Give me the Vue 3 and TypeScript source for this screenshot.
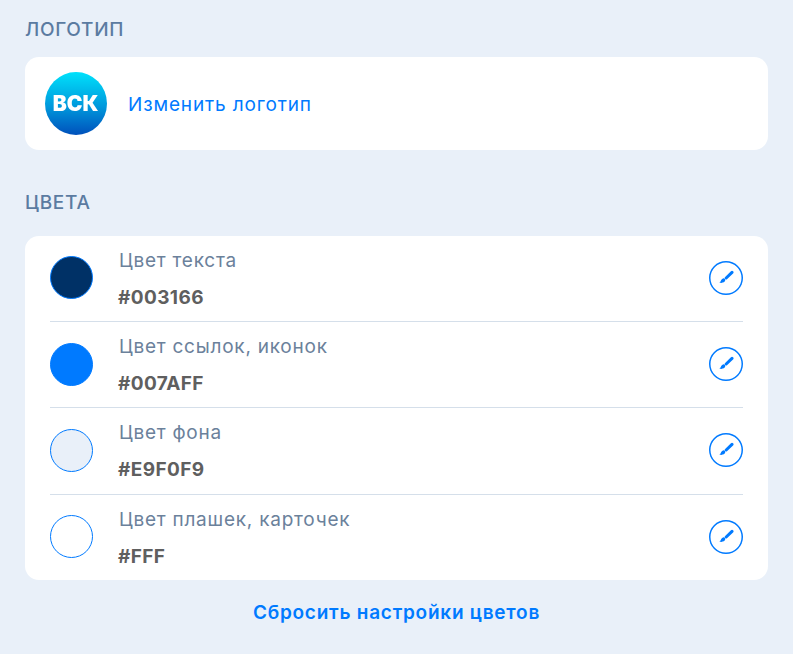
<template>
  <div class="page">
    <h2 class="section-title">ЛОГОТИП</h2>
    <div class="logo-card">
      <svg class="logo" viewBox="0 0 62 63" width="62" height="63">
        <defs>
          <linearGradient id="logo-bg" x1="0" y1="0" x2="0" y2="1">
            <stop offset="0" stop-color="#00e1fb" />
            <stop offset="0.55" stop-color="#0098dc" />
            <stop offset="1" stop-color="#0050bb" />
          </linearGradient>
        </defs>
        <ellipse cx="31" cy="31.5" rx="31" ry="31.5" fill="url(#logo-bg)" />
        <text x="30.5" y="39" text-anchor="middle" class="logo-text">ВСК</text>
      </svg>
      <a class="logo-link">Изменить логотип</a>
    </div>

    <h2 class="section-title colors-title">ЦВЕТА</h2>
    <div class="colors-card">
      <div v-for="item in colors" :key="item.label" class="color-row">
        <span class="swatch" :style="{ background: item.value }"></span>
        <div class="color-info">
          <div class="color-label">{{ item.label }}</div>
          <div class="color-value">{{ item.value }}</div>
        </div>
        <button class="edit-btn" type="button">
          <svg viewBox="0 0 16 16" width="16" height="16">
            <path d="M14 2.4 8.2 8" fill="none" stroke="#007aff" stroke-width="3" stroke-linecap="round" />
            <path d="M5.2 8.4c1.2-.4 2.5 1 2 2.2-.5 1.6-2.4 2.6-5.1 2.2-.5 0-.6-.5-.2-.8.8-.5.9-1 1.2-1.8.4-.9 1-1.5 2.1-1.8z" fill="#007aff" />
          </svg>
        </button>
      </div>
    </div>
    <a class="reset-link">Сбросить настройки цветов</a>
  </div>
</template>

<script setup lang="ts">
const colors = [
  { label: 'Цвет текста', value: '#003166' },
  { label: 'Цвет ссылок, иконок', value: '#007AFF' },
  { label: 'Цвет фона', value: '#E9F0F9' },
  { label: 'Цвет плашек, карточек', value: '#FFF' },
]
</script>

<style>
html,
body {
  background: #e9f0f9;
}
</style>

<style scoped>
.page {
  box-sizing: border-box;
  height: 654px;
  padding: 19px 25px 0;
  background: #e9f0f9;
  font-family: Inter, "Noto Sans", sans-serif;
  overflow: hidden;
}

.section-title {
  margin: 0;
  font-size: 19px;
  line-height: 22px;
  font-weight: 500;
  letter-spacing: 0.7px;
  color: #5b7ba1;
}

.logo-card {
  display: flex;
  align-items: center;
  gap: 21px;
  height: 93px;
  margin-top: 16px;
  padding: 0 20px;
  background: #fff;
  border-radius: 14px;
}

.logo {
  flex-shrink: 0;
}

.logo-text {
  font-family: Inter, sans-serif;
  font-size: 21px;
  font-weight: 900;
  fill: #fff;
  filter: blur(0.4px);
}

.logo-link {
  padding-top: 1px;
  font-size: 19px;
  letter-spacing: 0.85px;
  color: #007aff;
}

.colors-title {
  margin-top: 42px;
}

.colors-card {
  margin-top: 22px;
  padding: 0 25px;
  background: #fff;
  border-radius: 14px;
}

.color-row {
  display: flex;
  align-items: center;
  box-sizing: border-box;
  height: 86.2px;
  padding-bottom: 1.5px;
  border-bottom: 1px solid #d5dfea;
}

.color-row:last-child {
  height: 85.4px;
  border-bottom: none;
}

.swatch {
  box-sizing: border-box;
  flex-shrink: 0;
  width: 43px;
  height: 43px;
  border: 1px solid #007aff;
  border-radius: 50%;
}

.color-info {
  flex: 1;
  margin-left: 26px;
  padding-top: 3.5px;
}

.color-label {
  font-size: 19px;
  line-height: 22px;
  letter-spacing: 0.76px;
  color: #6b819b;
}

.color-value {
  margin-top: 15px;
  margin-left: -1px;
  font-size: 19px;
  line-height: 22px;
  font-weight: 700;
  letter-spacing: 0.4px;
  color: #5f5f5f;
}

.edit-btn {
  display: flex;
  align-items: center;
  justify-content: center;
  box-sizing: border-box;
  width: 34px;
  height: 34px;
  padding: 0;
  background: #fff;
  border: none;
  border-radius: 50%;
  box-shadow: inset 0 0 0 1.5px #007aff;
}

.reset-link {
  display: block;
  margin-top: 21px;
  text-align: center;
  font-size: 19px;
  line-height: 24px;
  font-weight: 600;
  letter-spacing: 0.76px;
  color: #007aff;
}
</style>
